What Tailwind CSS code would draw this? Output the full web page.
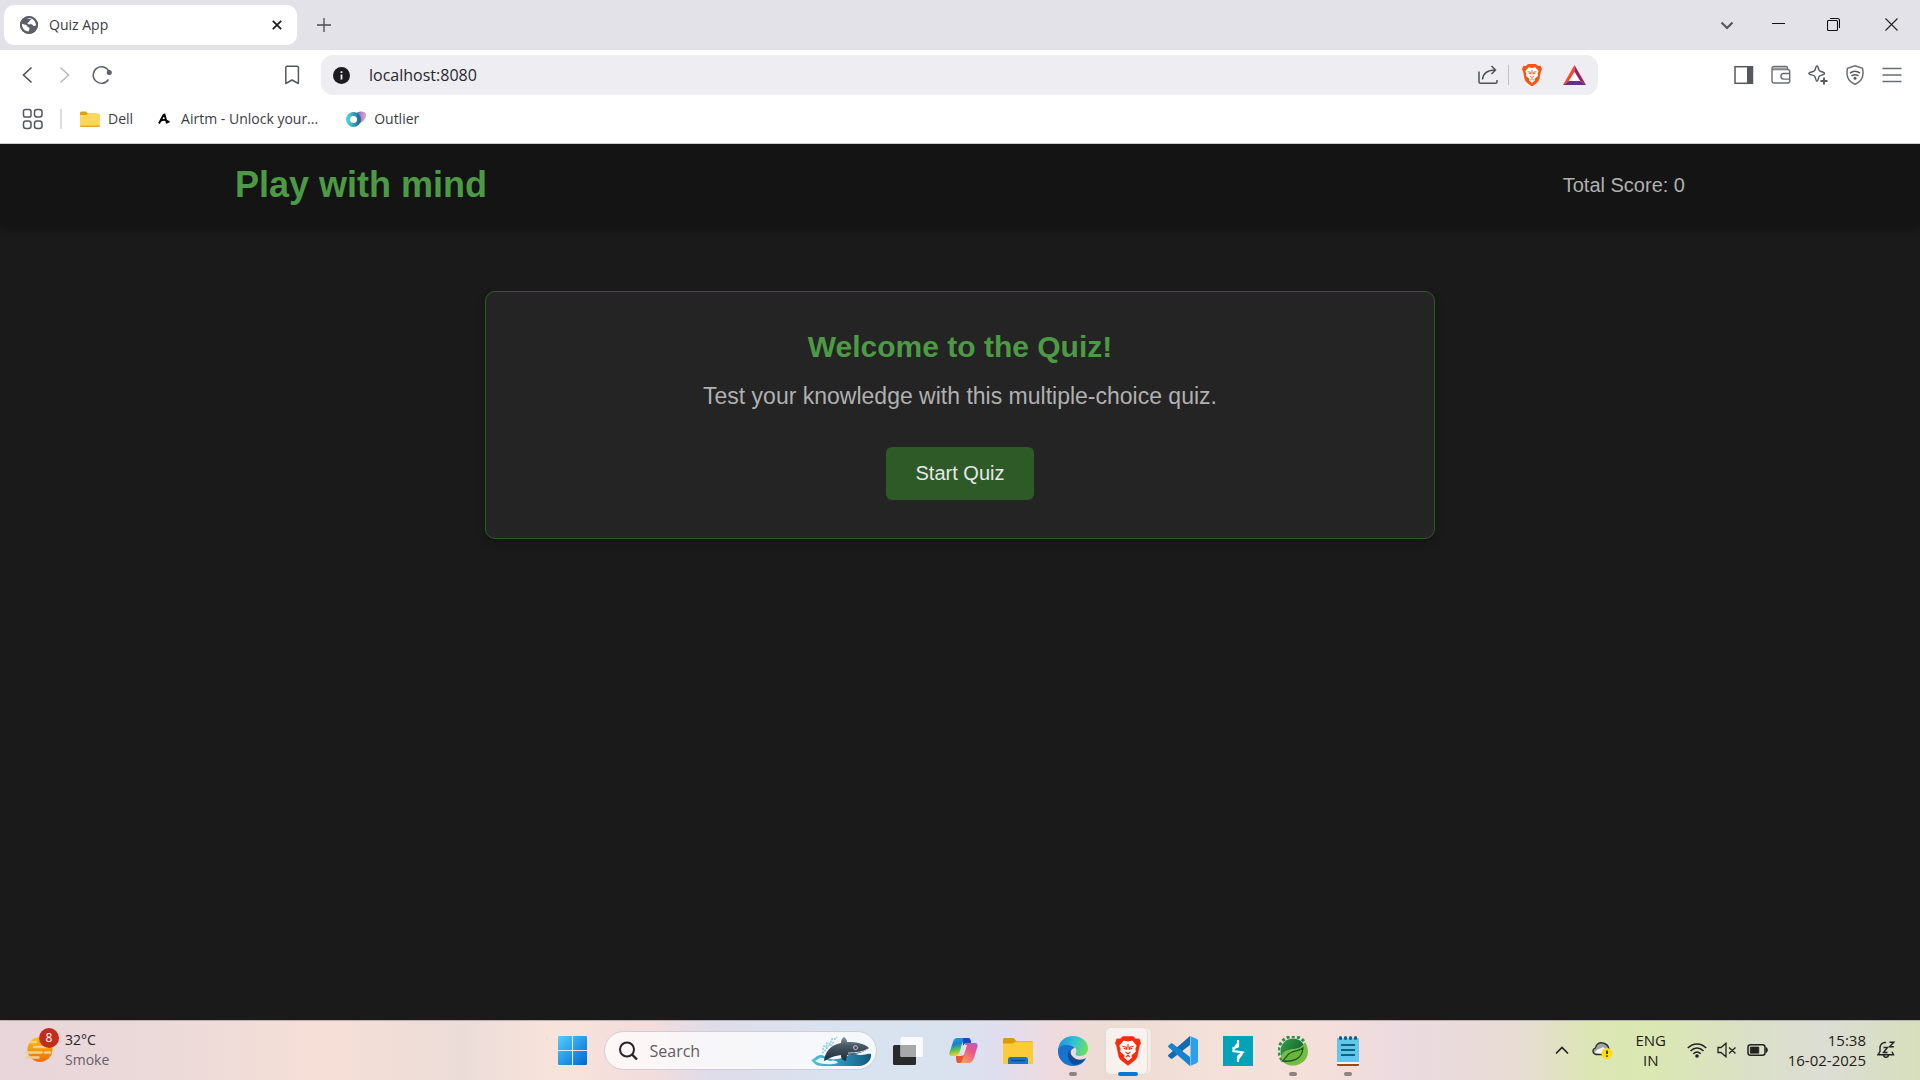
<!DOCTYPE html>
<html lang="en">
<head>
<meta charset="utf-8">
<title>Quiz App</title>
<script src="https://cdn.jsdelivr.net/npm/@tailwindcss/browser@4"></script>
</head>
<body class="flex min-h-screen flex-col bg-[#1a1a1a] font-['Open_Sans',sans-serif]">

<!-- Tab strip -->
<div class="flex h-[50px] items-center bg-[#e3e2e8] pl-1">
  <div class="flex h-10 w-[293px] items-center rounded-[10px] bg-white pl-4 pr-[10px]">
    <svg class="size-[18px]" viewBox="0 0 18 18"><circle cx="9" cy="9" r="9" fill="#5c6066"/><path d="M2 7.5c2 1.800 4.500.5 5 2.500.5 1.600 2.500.8 2.500 2.500 0 1.200-.8 1.800-.8 3C5 15.500 2 12.500 2 9zM6.500 2.500c1.500-.7 4-.8 5.500 0-.2 1.500-2.500 1-2.500 2.500-.2 1.500-2 1.200-2 2.500 0 1.200 2.500.8 4 .8 1.200 0 1.200 1.700 2.500 1.700 1 0 1.300-.5 2-.8 0-3-1.500-5-3.500-6.200" fill="#fff"/><circle cx="9" cy="9" r="8.100" fill="none" stroke="#5c6066" stroke-width="1.800"/></svg>
    <span class="ml-[11px] flex-1 text-sm text-[#3b3b42]">Quiz App</span>
    <button aria-label="Close tab" class="grid size-5 place-items-center"><svg class="size-[10px]" viewBox="0 0 10 10"><path d="M.8.8l8.400 8.400M9.200.8L.8 9.200" stroke="#222" stroke-width="1.800"/></svg></button>
  </div>
  <button aria-label="New tab" class="ml-5 size-[14px]"><svg viewBox="0 0 14 14"><path d="M7 0v14M0 7h14" stroke="#4a4a50" stroke-width="1.300"/></svg></button>
  <div class="ml-auto flex items-center gap-[38px] pr-[22px]">
    <button aria-label="Search tabs" class="h-4 w-[14px]"><svg viewBox="0 0 14 16"><path d="M1.500 5.500L7 11l5.500-5.500" fill="none" stroke="#55585e" stroke-width="2.200"/></svg></button>
    <button aria-label="Minimize" class="h-4 w-[13px]"><svg viewBox="0 0 13 16"><path d="M0 6.500h13" stroke="#111" stroke-width="1"/></svg></button>
    <button aria-label="Restore" class="ml-1 h-4 w-[13px]"><svg viewBox="0 0 13 16"><rect x=".5" y="3.500" width="10" height="10" rx="1" fill="none" stroke="#111" stroke-width="1.100"/><path d="M3 1.500h7.500a2 2 0 012 2V11" fill="none" stroke="#111" stroke-width="1.100"/></svg></button>
    <button aria-label="Close window" class="ml-[7px] h-4 w-[13px]"><svg viewBox="0 0 13 16"><path d="M.5 1.500l12 12M12.500 1.500l-12 12" stroke="#222" stroke-width="1.100"/></svg></button>
  </div>
</div>

<!-- Toolbar -->
<div class="flex h-[50px] items-center bg-white">
  <div class="flex w-[321px] items-center pl-[17px]">
    <button aria-label="Back" class="size-5"><svg viewBox="0 0 20 20"><path d="M14.500 2.500L6.500 10l8 7.500" fill="none" stroke="#4e5158" stroke-width="1.600"/></svg></button>
    <button aria-label="Forward" class="ml-[18px] size-5"><svg viewBox="0 0 20 20"><path d="M5.500 2.500l8 7.500-8 7.500" fill="none" stroke="#b9babf" stroke-width="1.500"/></svg></button>
    <button aria-label="Reload" class="ml-[17px] size-5"><svg viewBox="0 0 20 20"><path d="M16.500 14.500A8.300 8.300 0 1 1 17 6.500" fill="none" stroke="#5c5f66" stroke-width="1.400"/><circle cx="17.300" cy="7.500" r="2.500" fill="#5c5f66"/></svg></button>
    <button aria-label="Bookmark this page" class="ml-auto mr-[19px] size-5"><svg viewBox="0 0 20 20"><path d="M3.800 18.500V2.500c0-.8.500-1.300 1.300-1.300h10c.8 0 1.300.5 1.300 1.300v16L10 15z" fill="none" stroke="#55585e" stroke-width="1.500" stroke-linejoin="round"/></svg></button>
  </div>
  <div class="flex h-10 flex-1 items-center rounded-[12px] bg-[#eeedf2] pl-3 pr-3">
    <svg class="size-[17px]" viewBox="0 0 17 17"><circle cx="8.500" cy="8.500" r="8.500" fill="#1c1b20"/><path d="M8.500 7.500v5M8.500 4.200v1.800" stroke="#eeedf2" stroke-width="1.800"/></svg>
    <input aria-label="Address" value="localhost:8080" class="ml-[19px] h-8 flex-1 bg-transparent text-base text-[#27272e] outline-none">
    <button aria-label="Share" class="size-5"><svg viewBox="0 0 20 20"><path d="M1 6.500v10.300a1.500 1.500 0 001.500 1.500h15a1.500 1.500 0 001.500-1.500V15M4.500 14.500c.5-5.500 4-9.500 13-9.500M13.500 1l4 4-4 4" fill="none" stroke="#4e5158" stroke-width="1.500"/></svg></button>
    <span class="ml-[10px] h-5 w-px bg-[#c0c0c6]"></span>
    <button aria-label="Brave Shields" class="ml-[13px] h-[23px] w-5"><svg viewBox="0 0 30 34"><path d="M9 0h12l3 3 4-.5 2 5.500-1.500 3L26 23c-.5 2-2 4-4 5.500L15 34l-7-5.500C6 27 4.500 25 4 23L1.500 11 0 8l2-5.500L6 3z" fill="#fb5412"/><path d="M15 6l5-1 5 6-1.500 3 .5 4-5 4 .5 2.500L15 28.500l-4.500-4 .5-2.500-5-4 .5-4L5 11l5-6z" fill="#fff"/><path d="M8.500 11.500l4.500 1 .5 2.500-3.500-1M21.500 11.500l-4.500 1-.5 2.500 3.500-1M15 9v5M12 18l3 2.500L18 18M12.500 24l2.500-2 2.500 2" fill="none" stroke="#fb5412" stroke-width="1.300"/></svg></button>
    <button aria-label="Brave Rewards" class="ml-[21px] h-5 w-[23px]"><svg viewBox="0 0 23 20"><path d="M11.500 0L0 20l6-4 5.500-9z" fill="#ff4724"/><path d="M11.500 0L23 20l-6-4-5.500-9z" fill="#9e1f63"/><path d="M0 20h23l-6-4H6z" fill="#662d91"/><path d="M11.500 7L6 16h11z" fill="#fff"/></svg></button>
  </div>
  <div class="flex w-[322px] items-center justify-end gap-[17px] pr-[18px]">
    <button aria-label="Sidebar" class="size-5"><svg viewBox="0 0 20 20"><rect x="1" y="1.700" width="17.500" height="16.600" fill="none" stroke="#55585e" stroke-width="1.500"/><path d="M13 2h6v16h-6z" fill="#55585e"/></svg></button>
    <button aria-label="Wallet" class="size-5"><svg viewBox="0 0 20 20"><path d="M1 4.500h15.700a2 2 0 012 2V16a2 2 0 01-2 2H3a2 2 0 01-2-2V3.500a2 2 0 012-2h12A1.500 1.500 0 0116.500 3v1.500M18.700 8.500h-6a2.800 2.800 0 000 5.600h6" fill="none" stroke="#6a6d74" stroke-width="1.400"/><path d="M2 2.500h14v2H2z" fill="#9c9ea4"/></svg></button>
    <button aria-label="Leo AI" class="size-5"><svg viewBox="0 0 20 20"><path d="M9 1c1 0 1 .8 1.300 2 .7 2.800 1.200 3.300 4 4 1.200.3 2.200.5 2.200 1.400s-1 1.100-2.200 1.500c-2.800.7-3.300 1.200-4 4-.3 1.200-.4 2.400-1.300 2.400s-1-1.200-1.300-2.400c-.7-2.800-1.200-3.300-4-4C2.300 9.500.9 9.300.9 8.400s1.300-1.100 2.800-1.400c2.800-.7 3.300-1.200 4-4C8 1.800 8.100 1 9 1z" fill="none" stroke="#55585e" stroke-width="1.400"/><path d="M16 12.500v7M12.500 16h7" stroke="#55585e" stroke-width="1.900"/></svg></button>
    <button aria-label="VPN" class="size-5"><svg viewBox="0 0 20 20"><path d="M10 .8l7.500 2.500c.4 2.500 1.200 5-.2 9-1 3-3.800 5.500-7.300 6.900-3.500-1.400-6.300-3.900-7.300-6.900-1.400-4-.6-6.500-.2-9z" fill="none" stroke="#6a6d74" stroke-width="1.500"/><path d="M5 8.200c3-2.300 7-2.300 10 0M6.500 11c2.200-1.600 4.800-1.600 7 0" fill="none" stroke="#55585e" stroke-width="1.500"/><circle cx="10" cy="13.300" r="1.500" fill="#55585e"/></svg></button>
    <button aria-label="Menu" class="size-5"><svg viewBox="0 0 20 20"><path d="M.5 3.500h19M.5 10h19M.5 16.500h19" stroke="#6a6d74" stroke-width="1.500"/></svg></button>
  </div>
</div>

<!-- Bookmarks bar -->
<nav aria-label="Bookmarks" class="flex h-11 items-center border-b border-[#cfcfd3] bg-white pb-[5px] pl-[22px] text-sm text-[#3b3b42]">
  <button aria-label="All apps" class="size-[22px]"><svg viewBox="0 0 22 22" fill="none" stroke="#55585e" stroke-width="1.500"><rect x="1.500" y="1.500" width="7.500" height="7.500" rx="1.800"/><rect x="12.500" y="1.500" width="7.500" height="7.500" rx="2.500"/><rect x="1.500" y="13" width="7.500" height="7.500" rx="2.500"/><rect x="12.500" y="13" width="7.500" height="7.500" rx="2.500"/></svg></button>
  <span class="ml-4 h-5 w-[2px] bg-[#dcdce2]"></span>
  <a href="#" class="ml-[18px] flex items-center gap-2"><svg class="h-4 w-5" viewBox="0 0 20 16"><path d="M0 2a1.500 1.500 0 011.500-1.500H6L8 2.500h9V8H0z" fill="#e0a00c"/><path d="M0 4h6.500L8 2.500h10.500A1.500 1.500 0 0120 4v10.500a1.500 1.500 0 01-1.500 1.500h-17A1.500 1.500 0 010 14.500z" fill="#ffd65c"/><path d="M0 14.500h20a1.500 1.500 0 01-1.500 1.500h-17A1.500 1.500 0 010 14.500z" fill="#e5a92a"/></svg>Dell</a>
  <a href="#" class="ml-[25px] flex items-center gap-[11px]"><svg class="h-3 w-3" viewBox="0 0 12 12"><path d="M1 10.500L5.500 2l1-.5L9 10.500M3 7.500c3-1 5-.5 6 .5.600.6 1.500.8 2.500.8" fill="none" stroke="#000" stroke-width="1.900"/></svg>Airtm - Unlock your...</a>
  <a href="#" class="ml-7 flex items-center gap-2"><svg class="h-4 w-5" viewBox="0 0 20 16"><defs><linearGradient id="ol"><stop stop-color="#3a4f98"/><stop offset=".6" stop-color="#b98cd0"/><stop offset="1" stop-color="#e8a0b8"/></linearGradient><linearGradient id="ol2"><stop stop-color="#49d0e0"/><stop offset="1" stop-color="#1f6f96"/></linearGradient></defs><path d="M9 4c1-4 10-5 11-1s-4 9-8 10z" fill="url(#ol)"/><circle cx="7.500" cy="8.500" r="5.500" fill="#fff" stroke="url(#ol2)" stroke-width="4"/></svg>Outlier</a>
</nav>

<!-- Web page -->
<div class="flex flex-1 flex-col font-['Liberation_Sans',Arial,sans-serif] text-[#b0b0b0]">
  <header class="bg-[#141414] py-5 shadow-[0_4px_6px_rgba(0,0,0,0.2)]">
    <div class="mx-auto flex w-full max-w-[1450px] items-center justify-between">
      <h1 class="text-4xl font-bold leading-[42px] text-[#4c9a43]">Play with mind</h1>
      <p class="text-xl">Total Score: 0</p>
    </div>
  </header>
  <main class="flex-1 px-5 pt-[65px]">
    <section class="mx-auto flex max-w-[950px] flex-col items-center rounded-[10px] border border-[#2d5a27] bg-[#242424] px-10 pt-[37px] pb-[38px] shadow-[0_4px_8px_rgba(0,0,0,0.2)]">
      <h2 class="text-3xl font-bold leading-9 text-[#4c9a43]">Welcome to the Quiz!</h2>
      <p class="mt-[17px] text-[23px] leading-7">Test your knowledge with this multiple-choice quiz.</p>
      <button class="mt-[37px] rounded-md bg-[#2d5a27] px-[30px] py-[15px] text-xl leading-[23px] text-[#e8e8e8]">Start Quiz</button>
    </section>
  </main>
</div>

<!-- Taskbar -->
<footer class="flex h-[60px] items-center border-t border-[#b9b0b0] bg-[linear-gradient(90deg,#e8d5da_0%,#ecdad9_9%,#f6dfd6_17%,#ecdcd8_24%,#f8e3db_29%,#f2dcdc_34%,#dfdcea_37%,#d8e3ef_44%,#d8e3ef_49%,#dfdeee_52%,#efdade_55%,#ecdcd2_58%,#f4e1d9_63%,#f5dfda_69%,#ebdae0_73%,#e8dcd4_79%,#dbe6b4_83%,#dae8b2_86%,#dae0c6_91%,#dcddd4_95%,#d6dfbc_100%)]">
  <div class="flex flex-1 basis-0 items-center pb-[2px]">
    <button class="ml-[25px] flex items-center text-left text-sm leading-5 text-[#27232a]">
      <span class="relative size-[30px]">
        <svg class="size-[30px]" viewBox="0 0 30 30"><defs><linearGradient id="sun" x2="0" y2="1"><stop stop-color="#ffc400"/><stop offset="1" stop-color="#ee6a10"/></linearGradient></defs><circle cx="15" cy="14.500" r="12.500" fill="url(#sun)"/><path d="M6 7h5M9 12h13M1.500 17.500h15M20 17.500h5M1.500 22.500h12" stroke="#ebd293" stroke-width="2.600" stroke-linecap="round"/></svg>
        <span class="absolute -top-[7px] left-[14px] grid size-5 place-items-center rounded-full bg-[#c42b1c] text-xs text-white">8</span>
      </span>
      <span class="ml-[10px]">32°C<br><span class="text-[#666069]">Smoke</span></span>
    </button>
  </div>
  <div class="flex h-full items-center">
    <button aria-label="Start" class="grid w-[55px] place-items-center"><svg class="size-[29px]" viewBox="0 0 29 29"><defs><linearGradient id="win" x2="1" y2="1"><stop stop-color="#4fd0ff"/><stop offset="1" stop-color="#0067cf"/></linearGradient></defs><path d="M1 0h13v14H0V1a1 1 0 011-1zM15 0h13a1 1 0 011 1v13H15zM0 15h14v14H1a1 1 0 01-1-1zM15 15h14v13a1 1 0 01-1 1H15z" fill="url(#win)"/></svg></button>
    <label class="mx-1 flex h-[39px] w-[273px] items-center rounded-full border border-[#d3ccd6] bg-white/75 pl-[13px] pr-1">
      <svg class="size-5" viewBox="0 0 20 20"><circle cx="9" cy="8.500" r="7" fill="none" stroke="#26242a" stroke-width="2"/><path d="M14 13.500l5 5" stroke="#26242a" stroke-width="2.400"/></svg>
      <input type="text" placeholder="Search" aria-label="Search" class="ml-3 w-0 flex-1 bg-transparent text-base outline-none placeholder:text-[#5f5c66]">
      <svg class="h-8 w-[62px]" viewBox="0 0 62 32"><defs><linearGradient id="orca" x2="0" y2="1"><stop stop-color="#8894a2"/><stop offset=".35" stop-color="#4b5866"/><stop offset="1" stop-color="#1d2a38"/></linearGradient><linearGradient id="sea"><stop stop-color="#4fc3dd"/><stop offset=".5" stop-color="#2b93b8"/><stop offset="1" stop-color="#12567f"/></linearGradient></defs><path d="M1 25c4-1 5-5 10-5 4 0 5 4 10 4 6 1 12-1 18-4 5-3 8 0 12 0 4 0 6-2 10-1 1 6-5 12-12 12H12C6 31 4 28 1 25z" fill="url(#sea)"/><path d="M5 26c3-1 4-4 7-3 4 0 5 3 9 3 3-1 6 0 7 2-7 2-17 2-23-2z" fill="#e9f8fd"/><path d="M13 15l1-4 2 1 1-4 3 1 2-5 3 0 2-2M12 18l4-3 2-4 4-1 2-4" fill="none" stroke="#86cbea" stroke-width="1.500" stroke-dasharray="2 1"/><path d="M14 26c1-9 6-16 17-18 0-3 1-5 3-6 2 1 3 3 3 5 9 0 17 1 22 6-4 4-12 6-22 7l-1 6c-4-1-5-3-5-6-8 1-11 3-17 6z" fill="url(#orca)"/><path d="M44 11c2-1 5 1 3 3s-4 0-3-3zM38 18c8 0 15-1 20-4" fill="none" stroke="#cdd6dd" stroke-width="1"/></svg>
    </label>
    <button aria-label="Task view" class="grid w-[55px] place-items-center"><svg class="size-[30px]" viewBox="0 0 30 30"><rect y="9" width="23" height="20" rx="1.500" fill="#2a2a2a"/><rect x="7.500" y="1" width="22.500" height="20" rx="1.500" fill="#fff" opacity=".85"/><path d="M7.500 9H23v12H9a1.500 1.500 0 01-1.500-1.500z" fill="#a8a8aa"/></svg></button>
    <button aria-label="Copilot" class="grid w-[55px] place-items-center"><svg class="size-[29px]" viewBox="0 0 29 29"><defs><linearGradient id="cp" x2=".2" y2="1"><stop stop-color="#16a0e0"/><stop offset=".4" stop-color="#1d7fd6"/><stop offset=".7" stop-color="#4fc257"/><stop offset="1" stop-color="#f5cd2c"/></linearGradient><linearGradient id="cp2" x1="1" x2=".3" y2="1"><stop stop-color="#a35be8"/><stop offset=".5" stop-color="#e8578a"/><stop offset="1" stop-color="#f9a35c"/></linearGradient></defs><path d="M12 2h7c2 0 3 2 3 5h4c3 0 3 3 2 5l-3 10c-1 3-3 5-6 5h-7c-3 0-4-2-4-5l4-1 5-15z" fill="url(#cp2)"/><path d="M8 2h9c-2 1-3 3-4 6L10 18c-1 2-2 2-5 2H3c-3 0-3-2-2-5L4 6c1-3 2-4 4-4z" fill="url(#cp)"/><path d="M14 2h5c2 0 3 2 3 5h-4c-2 0-3 1-4 3z" fill="#1a46c8"/><path d="M15 9h3l-3.500 11H12z" fill="#e7e3f0"/><path d="M7 20h5l3-1-2 6c-1 2-2 2-4 2-1 0-2-2-2-5z" fill="#ea5532"/></svg></button>
    <button aria-label="File Explorer" class="grid w-[55px] place-items-center"><svg class="h-7 w-[30px]" viewBox="0 0 30 28"><path d="M0 2.500A1.500 1.500 0 011.500 1H10c2 0 2 3 4 3h14.500A1.500 1.500 0 0130 5.500V10H0z" fill="#dc9a0a"/><path d="M0 6.500h9c2 0 2.500-2 4.500-2H30V27H0z" fill="#fbcb3a"/><path d="M5 27v-4.500A2.500 2.500 0 017.500 20h15a2.500 2.500 0 012.500 2.500V27z" fill="#1878c8"/><path d="M8 23.500h14" stroke="#0a4b8c" stroke-width="1.300"/></svg></button>
    <button aria-label="Microsoft Edge" class="relative grid h-full w-[55px] place-items-center"><svg class="size-[30px]" viewBox="0 0 30 30"><defs><linearGradient id="ed" x1="0" y1=".3" x2="1" y2=".5"><stop stop-color="#1b8fdd"/><stop offset=".5" stop-color="#2fc2d6"/><stop offset="1" stop-color="#6ee05a"/></linearGradient><linearGradient id="ed2" x2=".6" y2="1"><stop stop-color="#1c6fc9"/><stop offset="1" stop-color="#1279d4"/></linearGradient></defs><path d="M0 14C1 5 7 0 15 0c9 0 15 6 15 12 0 5-3 8-8 8-4 0-5-1-4-3 2-5-4-10-11-7-4 1-6 2-7 4z" fill="url(#ed)"/><path d="M0 13c3-5 13-6 17-1-5 0-7 9 1 12 4 1 7 1 10-2-2 5-7 8-13 8C5 30-1 22 0 13z" fill="url(#ed2)"/><path d="M12 14c-4 4-2 13 5 15 6-1 9-4 11-7-3 2-7 2-10 1-4-2-6-5-6-9z" fill="#124b96"/></svg><span class="absolute bottom-1 h-1 w-2 rounded-full bg-[#8d8381]"></span></button>
    <button aria-label="Brave" class="relative grid h-full w-[55px] place-items-center"><span class="absolute h-12 w-[48px] rounded-md border border-[#e6dbd3] bg-white/40"></span><span class="absolute left-1 h-12 w-[43px] rounded-md border border-[#e6dbd3] bg-white/40"></span><svg class="relative h-[30px] w-[26px]" viewBox="0 0 30 34"><path d="M9 0h12l3 3 4-.5 2 5.500-1.500 3L26 23c-.5 2-2 4-4 5.500L15 34l-7-5.500C6 27 4.500 25 4 23L1.500 11 0 8l2-5.500L6 3z" fill="#fb2c0b"/><path d="M15 6l5-1 5 6-1.500 3 .5 4-5 4 .5 2.500L15 28.500l-4.500-4 .5-2.500-5-4 .5-4L5 11l5-6z" fill="#fff"/><path d="M8.500 11.500l4.500 1 .5 2.500-3.500-1M21.500 11.500l-4.500 1-.5 2.500 3.500-1M15 9v5M12 18l3 2.500L18 18M12.500 24l2.500-2 2.500 2" fill="none" stroke="#fb2c0b" stroke-width="1.300"/></svg><span class="absolute bottom-1 h-1 w-5 rounded-full bg-[#0a78d4]"></span></button>
    <button aria-label="Visual Studio Code" class="grid w-[55px] place-items-center"><svg class="size-[30px]" viewBox="0 0 30 30"><path d="M22 0v9L4.500 22.500c-.6.500-1.200.5-1.800 0L.5 20.600c-.6-.6-.6-1.300 0-1.900z" fill="#0f6cb4"/><path d="M22 30v-9L4.500 7.500c-.6-.5-1.200-.5-1.800 0L.5 9.400c-.6.600-.6 1.300 0 1.900z" fill="#1583cf"/><path d="M22 0l7 3c.6.300 1 .9 1 1.500v21c0 .6-.4 1.200-1 1.500l-7 3c-.8.200-1 .2-1.500-.3.800.5 2 .1 2-1V1.300c0-1.100-1.200-1.500-2-1 .5-.4.900-.5 1.500-.3z" fill="#2ba0f0"/></svg></button>
    <button aria-label="Burp Suite" class="grid w-[55px] place-items-center"><svg class="size-[30px]" viewBox="0 0 30 30"><path d="M0 0h30v30H0z" fill="#02a2ba"/><path d="M15 4v6.500L10.500 12v3l9 1.500L15 20.500V26M14.500 8l-3.500 5M19 17.500L15 23" fill="none" stroke="#fff" stroke-width="2.200"/></svg></button>
    <button aria-label="Spring Tools" class="relative grid h-full w-[55px] place-items-center"><svg class="size-[30px]" viewBox="0 0 30 30"><defs><linearGradient id="sp" x2="1" y2=".6"><stop stop-color="#35a04a"/><stop offset="1" stop-color="#0d5c2c"/></linearGradient></defs><circle cx="15" cy="15" r="12.500" fill="url(#sp)"/><path d="M4 24A14 14 0 0126 5.500" fill="none" stroke="#2a9145" stroke-width="3" stroke-dasharray="3 2.200"/><path d="M27 6c4 6 4 13 0 18-5 6-15 8-22 2l-2-5c1-5 5-7 11-8 6 0 10-2 13-7z" fill="#76bc43"/><path d="M4.500 25C14 26 24 24 25 12c-4 3-8 2.500-12 4.500-4 1.500-4.500 5-8.500 8.500z" fill="#6ab53e" stroke="#17592b" stroke-width="1.300"/></svg><span class="absolute bottom-1 h-1 w-2 rounded-full bg-[#8d8381]"></span></button>
    <button aria-label="Notepad" class="relative grid h-full w-[55px] place-items-center"><svg class="size-[30px]" viewBox="0 0 30 30"><path d="M4 24h22v4.500a1.500 1.500 0 01-1.500 1.500h-19A1.500 1.500 0 014 28.500z" fill="#974a10"/><path d="M4 23h22v5H4z" fill="#f5f5f5"/><path d="M4 3a1 1 0 011-1h20a1 1 0 011 1v23H4z" fill="#5fc8e8"/><path d="M8 9h14M8 14h14M8 19h14" stroke="#116183" stroke-width="1.800"/><path d="M7.500 1.500v1M12.500 1.500v1M17.500 1.500v1M22.500 1.500v1" stroke="#155f80" stroke-width="3" stroke-linecap="round"/></svg><span class="absolute bottom-1 h-1 w-2 rounded-full bg-[#8d8381]"></span></button>
  </div>
  <div class="flex flex-1 basis-0 items-center justify-end pb-[2px] text-[15px] leading-5 text-[#1f2118]">
    <button aria-label="Show hidden icons" class="h-3 w-[14px]"><svg viewBox="0 0 14 12"><path d="M1 9.500l6-6 6 6" fill="none" stroke="#222" stroke-width="1.700"/></svg></button>
    <button aria-label="OneDrive" class="ml-[23px] h-[18px] w-[21px]"><svg viewBox="0 0 21 18"><path d="M4 13.500C0 12.500 0 8 3.500 7 4 3 7.500 1 11 2c4 1 5.500 3 6 6v5.500z" fill="#a2a3a6" stroke="#2c2c2c" stroke-width="1.300"/><path d="M3 12c1-4 5-4 8-6l5 4-5 3z" fill="#f4f4f4"/><circle cx="15" cy="12.500" r="5.500" fill="#ffdf00"/><path d="M15 9.500v3.500M15 14.200v1.500" stroke="#111" stroke-width="1.500"/></svg></button>
    <button class="ml-[22px] w-[32px] text-center">ENG<br>IN</button>
    <button aria-label="Network, volume and battery" class="ml-[20px] flex items-center gap-[10px]">
      <svg class="h-4 w-5" viewBox="0 0 20 16" fill="none" stroke="#222" stroke-width="1.500"><path d="M.8 6C6 .5 14 .5 19.200 6M3.500 9c3.800-4 9.200-4 13 0M6.300 11.800c2.200-2.200 5.200-2.200 7.400 0"/><circle cx="10" cy="14" r="1.800" fill="#222" stroke="none"/></svg>
      <svg class="h-4 w-5" viewBox="0 0 20 16" fill="none" stroke="#222" stroke-width="1.300"><path d="M1 5.500h3l5-4.300v13.600l-5-4.300H1zM12 5.500l6.500 6M18.500 5.500l-6.500 6"/></svg>
      <svg class="h-4 w-[21px]" viewBox="0 0 21 16"><rect x="1" y="2.700" width="17" height="10.600" rx="2.500" fill="none" stroke="#222" stroke-width="1.500"/><path d="M3.300 5h8.500v6.200H3.300zM19 5.500c2 .5 2 4.500 0 5z" fill="#222" stroke="#222" stroke-width=".7"/></svg>
    </button>
    <button class="ml-[20px] text-right">15:38<br>16-02-2025</button>
    <button aria-label="Notifications" class="ml-[11px] mr-[25px] size-[18px]"><svg viewBox="0 0 18 18" fill="none" stroke="#222" stroke-width="1.400"><path d="M9 1.500C5 1 3 4 3 7v3.500l-2 3.300h15.500l-1.500-3M6.500 14c.3 3 4.700 3 5 0M6.500 6.500h4l-4 5h4M12.500 1.200h4.300l-4.300 4.500h4.300"/></svg></button>
  </div>
</footer>
</body>
</html>
